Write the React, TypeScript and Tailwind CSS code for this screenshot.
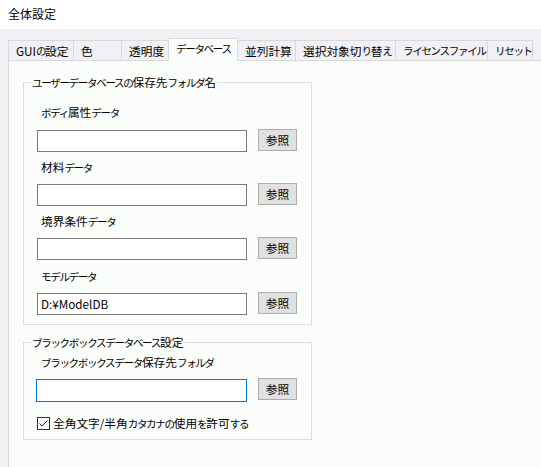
const tabs = [
  { label: "GUIの設定", w: "w-[65px]" },
  { label: "色", w: "w-[48px]" },
  { label: "透明度", w: "w-[48px]" },
  { label: "データベース", w: "w-[70px]", active: true },
  { label: "並列計算", w: "w-[58px]" },
  { label: "選択対象切り替え", w: "w-[100px]" },
  { label: "ライセンスファイル", w: "w-[92px]" },
  { label: "リセット", w: "w-[46px]", last: true },
];

const folders = [
  { label: "ボディ属性データ", value: "", top: "mt-[14px]", gap: "mt-[10px]" },
  { label: "材料データ", value: "", top: "mt-[7px]", gap: "mt-[9px]" },
  { label: "境界条件データ", value: "", top: "mt-[7px]", gap: "mt-[9px]" },
  { label: "モデルデータ", value: "D:¥ModelDB", top: "mt-[8px]", gap: "mt-[9px]" },
];

// kana in the UI font are much narrower than kanji: squeeze kana runs
const KANA = /([\u3040-\u30ff]+)/;

function JP({ text }: { text: string }) {
  return (
    <>
      {text.split(KANA).map((part, i) =>
        KANA.test(part) ? (
          <span key={i} className="text-[10.5px] tracking-[-1.3px]">
            {part}
          </span>
        ) : (
          <span key={i}>{part}</span>
        )
      )}
    </>
  );
}

function BrowseButton() {
  return (
    <button className="ml-[11px] -mt-px h-[22px] w-[39px] border border-[#adadad] bg-[#e1e1e1] text-[11.7px] leading-none text-black">
      参照
    </button>
  );
}

function FolderRow({ label, value, top, gap }: { label: string; value: string; top: string; gap: string }) {
  return (
    <div className={top}>
      <div className="ml-[17px] h-4 overflow-hidden leading-4">
        <JP text={label} />
      </div>
      <div className={`${gap} ml-[13px] flex items-start`}>
        <div className="flex h-[22px] w-[210px] items-center border border-[#7a7a7a] bg-white pl-[3px] leading-4">
          {value}
        </div>
        <BrowseButton />
      </div>
    </div>
  );
}

export default function App() {
  return (
    <div className="flex h-[467px] w-[541px] flex-col overflow-hidden bg-white font-['Noto_Sans_CJK_JP',sans-serif] text-[11.7px] text-black">
      {/* window title */}
      <div className="h-[29px] shrink-0 pl-2 pt-[6px] text-[12px] leading-4">全体設定</div>

      <div className="flex flex-1 flex-col bg-[#f1f0f4] pl-2 pt-[9px]">
        {/* tab strip */}
        <div className="flex h-[22px] items-end">
          {tabs.map((t) =>
            t.active ? (
              <div
                key={t.label}
                className={`relative z-10 -mx-px -mb-px flex h-[23px] shrink-0 items-center border border-b-0 border-[#d9d9d9] bg-[#fbfdfb] pb-[3px] pl-[7px] whitespace-nowrap ${t.w}`}
              >
                <JP text={t.label} />
              </div>
            ) : (
              <div
                key={t.label}
                className={`flex h-[20px] shrink-0 items-center border-t border-l border-[#d9d9d9] pl-[7px] whitespace-nowrap ${t.w} ${t.last ? "border-r" : ""}`}
              >
                <JP text={t.label} />
              </div>
            )
          )}
        </div>

        {/* tab page */}
        <div className="w-[600px] flex-1 border-t border-l border-[#d9d9d9] bg-[#fbfdfb] pt-[13px] pl-[14px]">
          <fieldset className="h-[251px] w-[289px] border border-[#dcdcdc]">
            <legend className="ml-[7px] h-4 px-px leading-4">
              <JP text="ユーザーデータベースの保存先フォルダ名" />
            </legend>
            {folders.map((f) => (
              <FolderRow key={f.label} label={f.label} value={f.value} top={f.top} gap={f.gap} />
            ))}
          </fieldset>

          <fieldset className="mt-[9px] h-[106px] w-[289px] border border-[#dcdcdc]">
            <legend className="ml-[7px] h-4 px-px leading-4">
              <JP text="ブラックボックスデータベース設定" />
            </legend>
            <div className="mt-[4px] ml-[17px] h-4 overflow-hidden leading-4">
              <JP text="ブラックボックスデータ保存先フォルダ" />
            </div>
            <div className="mt-[9px] ml-[12px] flex items-start">
              <div className="h-[23px] w-[211px] border border-[#0078d7] bg-white" />
              <BrowseButton />
            </div>
            <div className="mt-[13px] ml-[13px] flex h-4 items-center">
              <svg width="13" height="13" viewBox="0 0 13 13" className="shrink-0">
                <rect x="0.5" y="0.5" width="12" height="12" fill="#fff" stroke="#333" />
                <path d="M2.5 6.5 L5 9 L10.5 3.5" fill="none" stroke="#333" strokeWidth="1" />
              </svg>
              <span className="ml-[3px] leading-4">
                <JP text="全角文字/半角カタカナの使用を許可する" />
              </span>
            </div>
          </fieldset>
        </div>
      </div>
    </div>
  );
}
